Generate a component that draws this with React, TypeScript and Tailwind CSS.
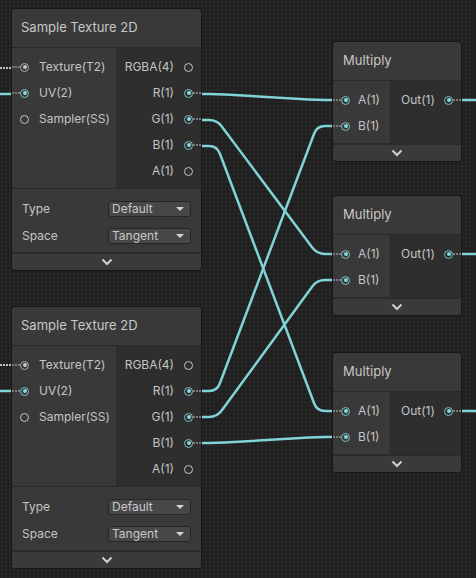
import React from 'react'

const WIRE = '#80d3d7'

type Pt = [number, number]

// edge: horizontal stub, straight diagonal, horizontal stub, with rounded bends
function wirePath(x0: number, y0: number, x1: number, y1: number, stub = 16, r = 8) {
  const p1: Pt = [x0 + stub, y0]
  const p2: Pt = [x1 - stub, y1]
  const len = Math.hypot(p2[0] - p1[0], p2[1] - p1[1])
  const ux = (p2[0] - p1[0]) / len
  const uy = (p2[1] - p1[1]) / len
  const rr = Math.min(r, len / 2)
  const a1: Pt = [p1[0] - rr, p1[1]]
  const b1: Pt = [p1[0] + ux * rr, p1[1] + uy * rr]
  const a2: Pt = [p2[0] - ux * rr, p2[1] - uy * rr]
  const b2: Pt = [p2[0] + rr, p2[1]]
  return `M${x0},${y0} L${a1} Q${p1} ${b1} L${a2} Q${p2} ${b2} L${x1},${y1}`
}

const EDGES: [number, number, number, number][] = [
  [201, 94, 333, 100],
  [201, 120, 333, 254],
  [201, 146, 333, 411],
  [201, 391, 333, 126],
  [201, 417, 333, 280],
  [201, 443, 333, 437],
]

const Port = ({ on, tex }: { on?: boolean; tex?: boolean }) => (
  <span
    className={
      on
        ? tex
          ? 'flex h-[9px] w-[9px] shrink-0 items-center justify-center rounded-full border border-[#a9a9a9]'
          : 'flex h-[9px] w-[9px] shrink-0 items-center justify-center rounded-full border border-[#78bfc2]'
        : 'flex h-[9px] w-[9px] shrink-0 items-center justify-center rounded-full border border-[#c4c4c4]'
    }
  >
    {on && (
      <span
        className={
          tex ? 'h-[4px] w-[4px] rounded-full bg-[#c8c8c8]' : 'h-[4px] w-[4px] rounded-full bg-[#86d8dc]'
        }
      />
    )}
  </span>
)

const Stub = ({ on }: { on?: boolean }) =>
  on ? (
    <span className="w-[8px] shrink-0 border-t-2 border-dotted border-[#7a7a7a]" />
  ) : (
    <span className="w-[8px] shrink-0" />
  )

const Chevron = () => (
  <svg width="12" height="8" viewBox="0 0 12 8">
    <polyline points="1.5,1.5 6,6 10.5,1.5" fill="none" stroke="#d0d0d0" strokeWidth="2" />
  </svg>
)

const Dropdown = ({ value }: { value: string }) => (
  <div className="ml-auto flex h-[16px] w-[83px] items-center rounded-[3px] border border-[#262626] bg-[#474747] pl-[3px] pr-[6px] text-[#c8c8c8]">
    {value}
    <span className="ml-auto h-0 w-0 border-x-[4px] border-t-[4px] border-x-transparent border-t-[#d4d4d4]" />
  </div>
)

function SampleTexture({ top }: { top: string }) {
  const inputs = [
    { label: 'Texture(T2)', on: true, tex: true },
    { label: 'UV(2)', on: true },
    { label: 'Sampler(SS)', on: false },
  ]
  const outputs = [
    { label: 'RGBA(4)', on: false },
    { label: 'R(1)', on: true },
    { label: 'G(1)', on: true },
    { label: 'B(1)', on: true },
    { label: 'A(1)', on: false },
  ]
  return (
    <div
      className={`absolute left-[12px] ${top} w-[189px] overflow-hidden rounded-[3px] bg-[#393939] text-[12px] text-[#c4c4c4] shadow-[0_0_0_1px_#171717]`}
    >
      <div className="flex h-[39px] items-center border-b border-[#2a2a2a] px-[9px] text-[13px] text-[#c8c8c8]">
        Sample Texture 2D
      </div>
      <div className="flex">
        <div className="w-[105px] border-r border-[#2a2a2a] pt-[6px]">
          {inputs.map((p) => (
            <div key={p.label} className="flex h-[26px] items-center">
              <Stub on={p.on} />
              <Port on={p.on} tex={p.tex} />
              <span className="ml-[10px]">{p.label}</span>
            </div>
          ))}
        </div>
        <div className="flex-1 bg-[#2e2e2e] pb-[4px] pt-[6px]">
          {outputs.map((p) => (
            <div key={p.label} className="flex h-[26px] items-center justify-end">
              <span className="mr-[10px]">{p.label}</span>
              <Port on={p.on} />
              <Stub on={p.on} />
            </div>
          ))}
        </div>
      </div>
      <div className="border-t border-[#2a2a2a] px-[10px] pb-[3px] pt-[6px]">
        <div className="flex h-[27px] items-center">
          <span>Type</span>
          <Dropdown value="Default" />
        </div>
        <div className="flex h-[27px] items-center">
          <span>Space</span>
          <Dropdown value="Tangent" />
        </div>
      </div>
      <div className="flex h-[18px] items-center justify-center border-t-2 border-[#2b2b2b] bg-[#3a3a3a]">
        <Chevron />
      </div>
    </div>
  )
}

function Multiply({ top }: { top: string }) {
  return (
    <div
      className={`absolute left-[333px] ${top} w-[128px] overflow-hidden rounded-[3px] bg-[#393939] text-[12px] text-[#c4c4c4] shadow-[0_0_0_1px_#171717]`}
    >
      <div className="flex h-[39px] items-center border-b border-[#2a2a2a] px-[10px] text-[13px] text-[#c8c8c8]">
        Multiply
      </div>
      <div className="flex">
        <div className="w-[58px] border-r border-[#2a2a2a] pb-[4px] pt-[6px]">
          {['A(1)', 'B(1)'].map((l) => (
            <div key={l} className="flex h-[26px] items-center">
              <Stub on />
              <Port on />
              <span className="ml-[8px]">{l}</span>
            </div>
          ))}
        </div>
        <div className="flex-1 bg-[#2e2e2e] pt-[6px]">
          <div className="flex h-[26px] items-center pl-[10px]">
            <span>Out(1)</span>
            <span className="ml-auto" />
            <Port on />
            <Stub on />
          </div>
        </div>
      </div>
      <div className="flex h-[18px] items-center justify-center border-t-2 border-[#2b2b2b] bg-[#3a3a3a]">
        <Chevron />
      </div>
    </div>
  )
}

export default function App() {
  return (
    <div className="relative h-[578px] w-[476px] overflow-hidden bg-[#202020] bg-[radial-gradient(#2a2a2a_0.8px,transparent_0.8px)] bg-[size:4px_4px] font-['Inter',sans-serif]">
      <svg className="absolute inset-0" width="476" height="578">
        {EDGES.map(([x0, y0, x1, y1], i) => (
          <path key={i} d={wirePath(x0, y0, x1, y1)} fill="none" stroke={WIRE} strokeWidth="2.5" />
        ))}
        {[100, 254, 411].map((y) => (
          <line key={y} x1="461" y1={y} x2="476" y2={y} stroke={WIRE} strokeWidth="2.5" />
        ))}
        {[68, 365].map((y) => (
          <line key={y} x1="0" y1={y} x2="12" y2={y} stroke="#bdbdbd" strokeWidth="2" strokeDasharray="2 1" />
        ))}
        {[94, 391].map((y) => (
          <line key={y} x1="0" y1={y} x2="12" y2={y} stroke={WIRE} strokeWidth="2.5" />
        ))}
      </svg>
      <SampleTexture top="top-[9px]" />
      <SampleTexture top="top-[307px]" />
      <Multiply top="top-[42px]" />
      <Multiply top="top-[196px]" />
      <Multiply top="top-[353px]" />
    </div>
  )
}
